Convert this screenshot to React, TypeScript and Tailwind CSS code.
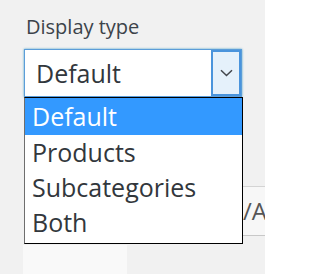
import React from "react";

const OPTIONS = ["Default", "Products", "Subcategories", "Both"];

function Chevron() {
  return (
    <svg width="13" height="8" viewBox="0 0 13 8" fill="none">
      <path d="M1 1.2 6.5 6.5 12 1.2" stroke="#43474d" strokeWidth="1.5" />
    </svg>
  );
}

export default function App() {
  return (
    <div className="relative h-[274px] w-[265px] overflow-hidden bg-[#f1f1f1] font-['Open_Sans',sans-serif]">
      <div className="pt-[14px]">
        <label className="ml-[26px] block text-[20px] leading-[26px] text-[#3c434a]">Display type</label>

        {/* closed select */}
        <div className="mt-[9px] ml-[24px] flex h-[48px] w-[218px] border border-[#5b9dd9] bg-white shadow-[0_0_2px_rgba(30,140,190,0.8)]">
          <span className="flex-1 self-center pl-[11px] text-[25px] leading-[30px] text-[#32373c]">Default</span>
          <span className="flex w-[30px] items-center justify-center border-2 border-[#4a94dc] bg-[#e5f1fb]">
            <Chevron />
          </span>
        </div>

        {/* field behind the open list */}
        <div className="mt-[89px] ml-[215px] flex h-[50px] w-[50px] items-center overflow-hidden whitespace-nowrap border-y border-[#d4d4d4] border-b-[#c8c8c8] bg-[#f7f7f7] pl-[10px] text-[24px] text-[#555]">
          N/A
        </div>

        <div className="mt-[9px] ml-[23px] h-[40px] w-[104px] bg-[#f9f9f9]" />
      </div>

      {/* open list */}
      <ul className="absolute left-[24px] top-[97px] w-[219px] border border-black border-l-[#6e6e6e] bg-white pb-[3px] text-[25px] text-[#32373c]">
        {OPTIONS.map((o, i) => (
          <li
            key={o}
            className={
              i === 0
                ? "h-[37px] bg-[#3399ff] pl-[7px] leading-[37px] text-white"
                : "h-[35px] pl-[7px] leading-[35px]"
            }
          >
            {o}
          </li>
        ))}
      </ul>
    </div>
  );
}
